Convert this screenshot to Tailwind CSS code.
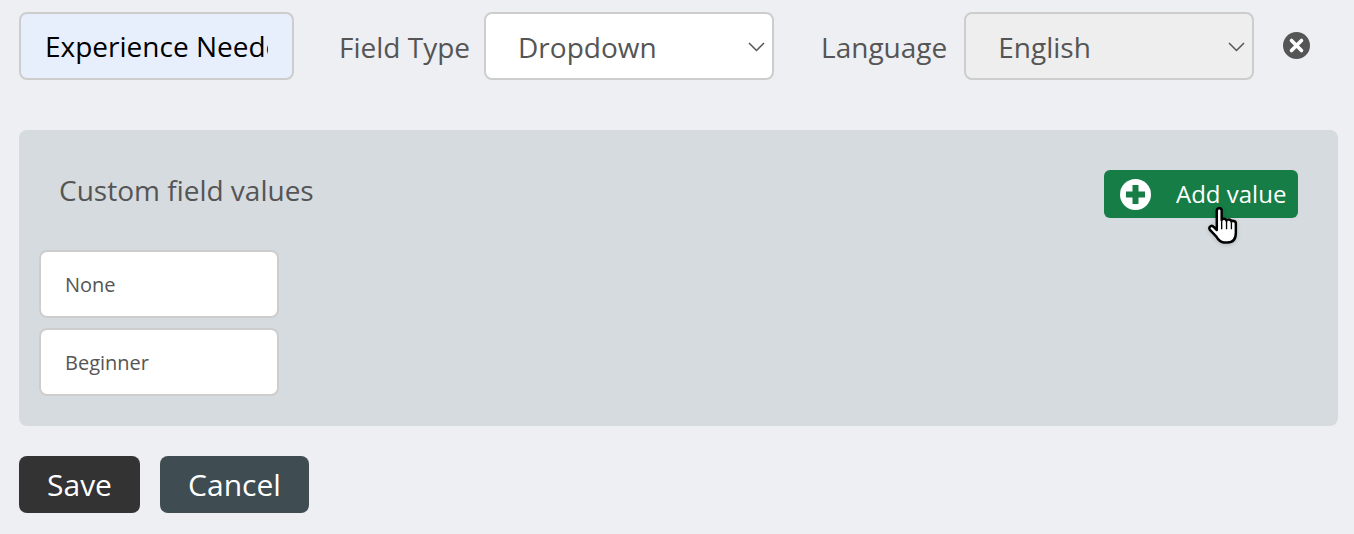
<!DOCTYPE html>
<html lang="en">
<head>
    <meta charset="UTF-8">
    <meta name="viewport" content="width=device-width, initial-scale=1.0">
    <title>Custom field</title>
    <script src="https://cdn.jsdelivr.net/npm/@tailwindcss/browser@4"></script>
</head>
<body class="bg-[#edeff3] font-['Open_Sans',sans-serif] text-[#555] overflow-hidden">
    <div class="w-[1354px] h-[534px] pt-3 pl-[19px]">
        <!-- Field row -->
        <div class="flex items-center h-[68px]">
            <input type="text" value="Experience Needed" class="w-[275px] h-[68px] pl-[24px] pr-[24px] text-[28px] text-black bg-[#e8effc] border-2 border-[#cdcdcd] rounded-lg outline-none">
            <label class="ml-[45px] mt-[2px] text-[28px]">Field Type</label>
            <div class="relative ml-[14px] w-[290px] h-[68px] pl-[32px] pt-[2px] flex items-center text-[28px] bg-white border-2 border-[#cdcdcd] rounded-lg">
                Dropdown
                <svg class="absolute right-[7px] top-[28px]" width="17" height="10" viewBox="0 0 17 10" fill="none" stroke="#555" stroke-width="1.5"><path d="M1 1l7.500 7.500L16 1"/></svg>
            </div>
            <label class="ml-[47px] mt-[2px] text-[28px]">Language</label>
            <div class="relative ml-[17px] w-[290px] h-[68px] pl-[32px] pt-[2px] flex items-center text-[28px] bg-[#eeeeee] border-2 border-[#cdcdcd] rounded-lg">
                English
                <svg class="absolute right-[7px] top-[28px]" width="17" height="10" viewBox="0 0 17 10" fill="none" stroke="#555" stroke-width="1.5"><path d="M1 1l7.500 7.500L16 1"/></svg>
            </div>
            <svg class="ml-[29px] -mt-[1px]" width="27" height="27" viewBox="0 0 27 27"><circle cx="13.500" cy="13.500" r="13.500" fill="#555"/><path d="M8.500 8.500l10 10M18.500 8.500l-10 10" stroke="#fff" stroke-width="3.600" stroke-linecap="round"/></svg>
        </div>

        <!-- Custom field values panel -->
        <div class="mt-[50px] w-[1319px] h-[296px] bg-[#d6dbdf] rounded-lg pt-10 px-5">
            <div class="flex justify-between items-start h-[80px] pr-5">
                <h3 class="ml-5 mt-[2px] text-[28px] leading-[36px]">Custom field values</h3>
                <div class="relative w-[194px] h-12 bg-[#167d46] rounded-md text-white text-[24px] flex items-center">
                    <svg class="ml-4" width="31" height="31" viewBox="0 0 31 31"><circle cx="15.500" cy="15.500" r="15.500" fill="#fff"/><path d="M15.500 6v19M6 15.500h19" stroke="#167d46" stroke-width="6"/></svg>
                    <span class="ml-[25px]">Add value</span>
                    <!-- pointer cursor -->
                    <svg class="absolute left-[103px] top-[37px] drop-shadow-sm" width="32" height="39" viewBox="0 0 36 44"><path d="M11 4c0-3.500 5.500-3.500 5.500 0V15c0-2 5-2.500 5.500.5 0-2 5-2 5.500 1 .5-1.500 5-1 5 2V29c0 6.500-3 11-9.500 11h-4c-4.500 0-6.500-3-8.500-6.500L3 25.500c-1.500-3.500 2.500-5.500 4.500-3L11 26z" fill="#fff" stroke="#000" stroke-width="2.800" stroke-linejoin="round"/><path d="M16.500 16v9M22 16v9M27.500 17.500V25" stroke="#000" stroke-width="1.500" fill="none"/></svg>
                </div>
            </div>
            <div class="flex flex-col gap-[10px]">
                <input type="text" value="None" class="w-[240px] h-[68px] pl-[24px] text-[20px] text-[#555] bg-white border-2 border-[#cdcdcd] rounded-lg outline-none">
                <input type="text" value="Beginner" class="w-[240px] h-[68px] pl-[24px] text-[20px] text-[#555] bg-white border-2 border-[#cdcdcd] rounded-lg outline-none">
            </div>
        </div>

        <!-- Actions -->
        <div class="mt-[30px] flex gap-5">
            <button class="w-[121px] h-[57px] bg-[#333333] text-white text-[30px] rounded-lg">Save</button>
            <button class="w-[149px] h-[57px] bg-[#3f4c52] text-white text-[30px] rounded-lg">Cancel</button>
        </div>
    </div>
</body>
</html>
